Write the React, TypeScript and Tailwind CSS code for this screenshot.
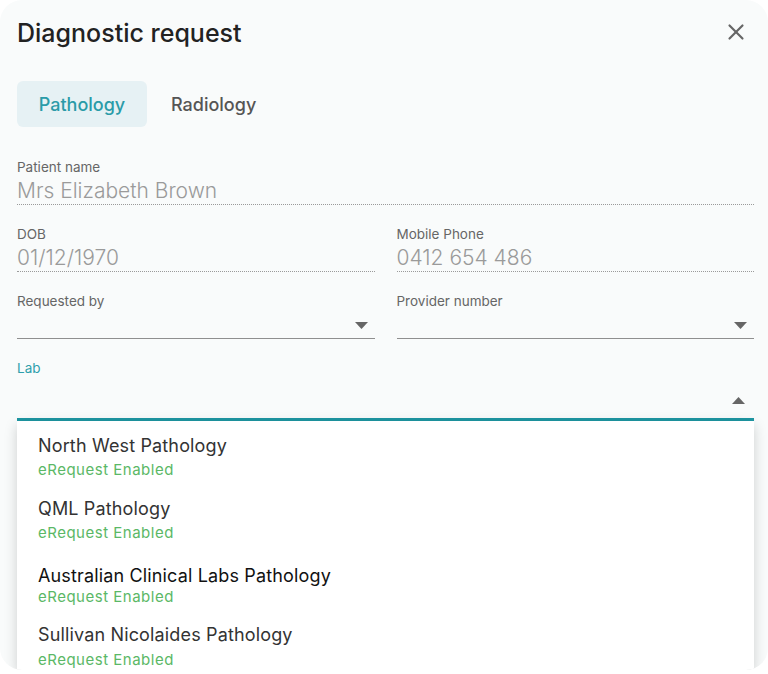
import { X } from "lucide-react";

const labs = [
  { name: "North West Pathology", top: "pt-[13px]", nameCls: "text-[#333]", subCls: "mt-[2px] leading-[20px]" },
  { name: "QML Pathology", top: "pt-[17px]", nameCls: "text-[#333]", subCls: "mt-[2px] leading-[20px]" },
  { name: "Australian Clinical Labs Pathology", top: "pt-[21px]", nameCls: "text-[#111]", subCls: "leading-[18px]" },
  { name: "Sullivan Nicolaides Pathology", top: "pt-[17px]", nameCls: "text-[#333]", subCls: "mt-[3px] leading-[20px]" },
];

function Caret({ up = false }: { up?: boolean }) {
  return (
    <svg width="13" height="7" viewBox="0 0 13 7" className="shrink-0">
      {up ? <path d="M0 7 L6.5 0 L13 7 Z" fill="#666" /> : <path d="M0 0 L13 0 L6.5 7 Z" fill="#666" />}
    </svg>
  );
}

function TextField({ label, value }: { label: string; value: string }) {
  return (
    <div className="flex flex-col border-b border-dotted border-[#9a9a9a]">
      <span className="text-[13.5px] leading-[16px] text-[#666]">{label}</span>
      <span className="mt-[3px] text-[21px] font-light leading-[26px] text-[#9a9a9a]">{value}</span>
    </div>
  );
}

function SelectField({ label }: { label: string }) {
  return (
    <div className="flex flex-col border-b border-[#8f8f8f]">
      <span className="text-[13.5px] leading-[16px] text-[#666]">{label}</span>
      <div className="mt-[3px] flex h-[26px] items-center justify-end pr-[7px]">
        <Caret />
      </div>
    </div>
  );
}

export default function App() {
  return (
    <div className="h-[674px] w-[768px] bg-white font-['Inter',sans-serif]">
      <div className="flex h-[670px] flex-col overflow-hidden rounded-[22px] bg-[#f9fbfb]">
        <div className="flex items-start justify-between pl-[17px] pr-[19px] pt-[17px]">
          <h1 className="text-[25px] font-medium leading-[33px] text-[#222]">Diagnostic request</h1>
          <button className="mt-[2px] text-[#666]">
            <X size={26} strokeWidth={2} />
          </button>
        </div>

        <div className="mt-[31px] flex items-center gap-[24px] px-[17px]">
          <div className="flex h-[46px] w-[130px] items-center justify-center rounded-[6px] bg-[#e6f1f4] text-[18px] font-medium text-[#2a9ba8]">
            Pathology
          </div>
          <div className="text-[18px] font-medium text-[#555]">Radiology</div>
        </div>

        <div className="mt-[11px] h-px w-full bg-[#e2e4e4]" />

        <div className="flex flex-col pl-[17px] pr-[14px] pt-[21px]">
          <TextField label="Patient name" value="Mrs Elizabeth Brown" />
          <div className="mt-[21px] grid grid-cols-2 gap-x-[22px]">
            <TextField label="DOB" value="01/12/1970" />
            <TextField label="Mobile Phone" value="0412 654 486" />
          </div>
          <div className="mt-[21px] grid grid-cols-2 gap-x-[22px]">
            <SelectField label="Requested by" />
            <SelectField label="Provider number" />
          </div>
          <div className="mt-[21px] flex flex-col">
            <span className="text-[13.5px] leading-[16px] text-[#2e9fac]">Lab</span>
            <div className="flex h-[42px] items-center justify-end pr-[9px] pt-[6px]">
              <Caret up />
            </div>
            <div className="h-[3px] w-full bg-[#1e97a3]" />
          </div>
        </div>

        <div className="ml-[17px] mr-[14px] flex-1 bg-white pl-[21px] shadow-[0_4px_12px_rgba(0,0,0,0.18)]">
          {labs.map((lab) => (
            <div key={lab.name} className={`flex flex-col ${lab.top}`}>
              <span className={`text-[18px] leading-[24px] tracking-[0.15px] ${lab.nameCls}`}>{lab.name}</span>
              <span className={`text-[15px] tracking-[0.5px] text-[#5bb866] ${lab.subCls}`}>eRequest Enabled</span>
            </div>
          ))}
        </div>
      </div>
    </div>
  );
}
